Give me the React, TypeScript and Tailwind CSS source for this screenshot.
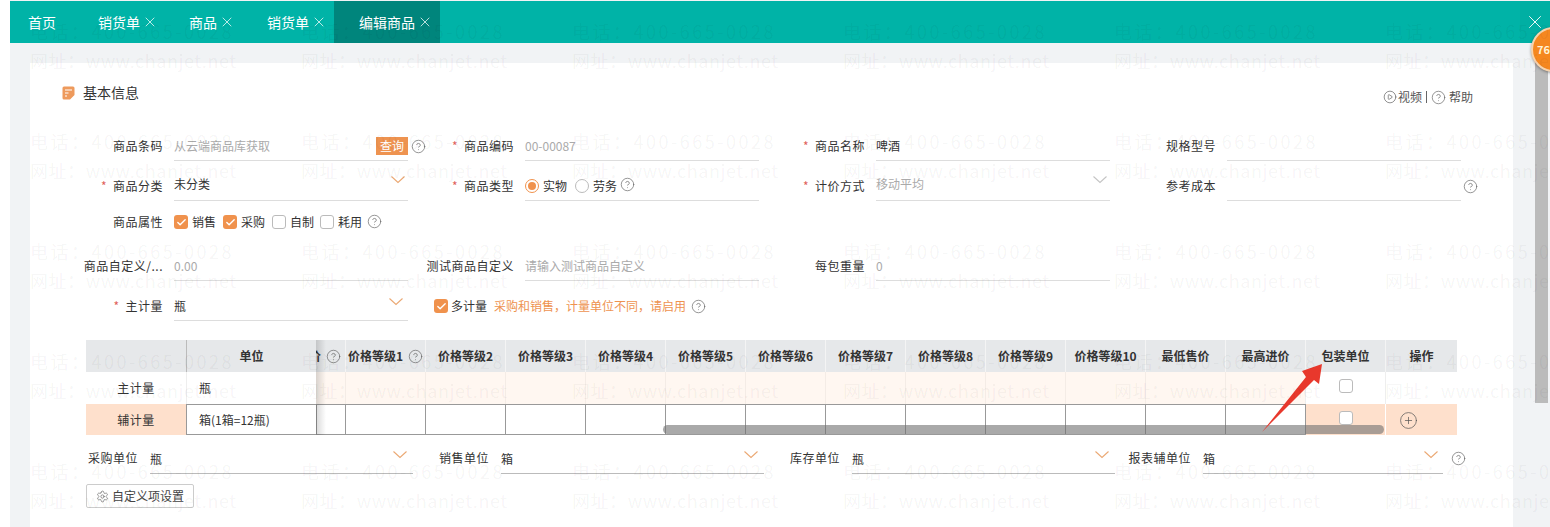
import type { ReactNode } from "react";
import { Check, CirclePlay, CirclePlus, CircleHelp, Settings, X } from "lucide-react";

const PRICE_COLS = Array.from({ length: 10 }, (_, i) => `价格等级${i + 1}`);

function Help({ className = "" }: { className?: string }) {
  return <CircleHelp size={15} strokeWidth={1.1} className={`shrink-0 text-[#666] ${className}`} />;
}

function Chevron({ muted = false, className = "" }: { muted?: boolean; className?: string }) {
  return (
    <svg width="14" height="8" viewBox="0 0 14 8" fill="none" className={`shrink-0 ${className}`}>
      <path d="M0.5 0.5 L7 6.5 L13.5 0.5" stroke={muted ? "#c4c4c4" : "#eba873"} strokeWidth="1.1" />
    </svg>
  );
}

function Box({ checked = false, className = "" }: { checked?: boolean; className?: string }) {
  if (checked) {
    return (
      <span className={`flex h-[14px] w-[14px] shrink-0 items-center justify-center rounded-[3px] bg-[#f0924d] ${className}`}>
        <Check size={11} strokeWidth={3} className="text-white" />
      </span>
    );
  }
  return <span className={`block h-[14px] w-[14px] shrink-0 rounded-[3px] border border-[#bbb] bg-white ${className}`} />;
}

function Field({
  label,
  required = false,
  trailing,
  children,
}: {
  label: string;
  required?: boolean;
  trailing?: ReactNode;
  children?: ReactNode;
}) {
  return (
    <div className="flex h-[40px] w-[351px] items-end">
      <div className="flex h-[30px] w-[99px] shrink-0 items-center justify-end whitespace-nowrap tracking-[0.5px] text-[#333]">
        {required && <span className="mr-[6px] text-[#e0605a]">*</span>}
        {label}
      </div>
      <div className="ml-[11px] flex h-[30px] w-[234px] shrink-0 items-center justify-between border-b border-[#ddd]">
        {children}
      </div>
      {trailing}
    </div>
  );
}

function Tab({ label, closable = true, active = false, width, pad }: { label: string; closable?: boolean; active?: boolean; width: string; pad: string }) {
  return (
    <div className={`flex h-full items-center text-[14px] text-white ${width} ${pad} ${active ? "bg-[#00857c]" : ""}`}>
      {label}
      {closable && <X size={16} strokeWidth={1.1} className="ml-[2px]" />}
    </div>
  );
}

function BottomField({ label, value, wide = true, trailing }: { label: string; value: string; wide?: boolean; trailing?: ReactNode }) {
  return (
    <div className="flex h-[30px] w-[351px] items-stretch">
      <div className="flex w-[52px] shrink-0 items-center justify-end whitespace-nowrap pb-[2px] tracking-[0.5px] text-[#333]">{label}</div>
      <div className={`ml-[12px] flex shrink-0 items-center justify-between border-b border-[#bbb] text-[#333] ${wide ? "w-[263px]" : "w-[240px]"}`}>
        <span>{value}</span>
        <Chevron className={`mb-[8px] ${wide ? "mr-[6px]" : "mr-[5px]"}`} />
      </div>
      {trailing}
    </div>
  );
}

function HeadCell({ children }: { children: ReactNode }) {
  return (
    <div className="flex items-center justify-center gap-[5px] overflow-hidden whitespace-nowrap border-l border-[#f4f4f4] bg-[#e6e8ea] font-bold text-[#333]">
      {children}
    </div>
  );
}

export default function App() {
  return (
    <div className="relative flex h-[527px] w-[1550px] overflow-hidden bg-white font-['Noto_Sans_CJK_SC','Liberation_Sans',sans-serif] text-[12px]">
      <div className="w-[10px] shrink-0 bg-white" />
      <div className="flex min-w-0 flex-1 flex-col bg-[#f1f3f5]">
        {/* tab bar */}
        <div className="mt-[1px] flex h-[42px] shrink-0 items-center justify-between bg-[#00b3a7]">
          <div className="flex h-full">
            <Tab label="首页" closable={false} width="w-[70px]" pad="pl-[18px]" />
            <Tab label="销货单" width="w-[91px]" pad="pl-[18px]" />
            <Tab label="商品" width="w-[78px]" pad="pl-[18px]" />
            <Tab label="销货单" width="w-[85px]" pad="pl-[18px]" />
            <Tab label="编辑商品" active width="w-[106px]" pad="pl-[25px]" />
          </div>
          <div className="flex h-full w-[30px] items-center justify-center bg-[#00afa3]">
            <X size={22} strokeWidth={1} className="text-white" />
          </div>
        </div>

        {/* panel */}
        <div className="mt-[20px] ml-[20px] w-[1483px] flex-1 bg-white">
          <div className="flex h-[58px] items-start justify-between pt-[19px] pl-[32px] pr-[40px]">
            <div className="flex items-center text-[14px] text-[#333]">
              <svg width="13" height="14" viewBox="0 0 13 14" className="mr-[8px]">
                <path d="M2 0.5 H11 A1.5 1.5 0 0 1 12.5 2 V9 L8 13.5 H2 A1.5 1.5 0 0 1 0.5 12 V2 A1.5 1.5 0 0 1 2 0.5 Z" fill="#ee9a5c" />
                <path d="M3 4 H10 M3 7 H6.5 M3 10 H5" stroke="#fff" strokeWidth="1.2" />
              </svg>
              基本信息
            </div>
            <div className="mt-[6px] flex items-center text-[#555]">
              <CirclePlay size={14} strokeWidth={1.1} className="mr-[1px]" />
              视频
              <span className="mx-[4px] h-[12px] w-px bg-[#666]" />
              <Help className="mr-[3px]" />
              帮助
            </div>
          </div>

          <div className="pl-[34px]">
            <div className="flex">
              <Field
                label="商品条码"
                trailing={<Help className="mb-[7px] ml-[3px]" />}
              >
                <span className="text-[#aaa]">从云端商品库获取</span>
                <span className="flex h-[18px] w-[32px] items-center justify-center bg-[#ee9350] text-white">查询</span>
              </Field>
              <Field label="商品编码" required>
                <span className="text-[#aaa]">00-00087</span>
              </Field>
              <Field label="商品名称" required>
                <span className="text-[#333]">啤酒</span>
              </Field>
              <Field label="规格型号" />
            </div>

            <div className="flex">
              <Field label="商品分类" required>
                <span className="-mt-[3px] text-[#333]">未分类</span>
                <Chevron className="mr-[3px] mb-[12px]" />
              </Field>
              <Field label="商品类型" required>
                <div className="flex items-center text-[#333]">
                  <span className="mr-[4px] flex h-[14px] w-[14px] items-center justify-center rounded-full border border-[#f0924d]">
                    <span className="h-[8px] w-[8px] rounded-full bg-[#f0924d]" />
                  </span>
                  实物
                  <span className="mr-[4px] ml-[8px] h-[14px] w-[14px] rounded-full border border-[#bbb]" />
                  劳务
                  <Help className="ml-[3px] -mt-[3px]" />
                </div>
              </Field>
              <Field label="计价方式" required>
                <span className="-mt-[4px] text-[#aaa]">移动平均</span>
                <Chevron muted className="mr-[3px] mb-[11px]" />
              </Field>
              <Field label="参考成本" trailing={<Help className="mb-[7px] ml-[2px]" />} />
            </div>

            <div className="flex h-[40px] items-center pt-[2px]">
              <div className="w-[99px] text-right tracking-[0.5px] text-[#333]">商品属性</div>
              <div className="ml-[11px] flex items-center text-[#333]">
                <Box checked className="mr-[4px]" />
                销售
                <Box checked className="mr-[4px] ml-[7px]" />
                采购
                <Box className="mr-[4px] ml-[7px]" />
                自制
                <Box className="mr-[4px] ml-[6px]" />
                耗用
                <Help className="ml-[5px] -mt-[1px]" />
              </div>
            </div>

            <div className="flex">
              <Field label="商品自定义/...">
                <span className="text-[#aaa]">0.00</span>
              </Field>
              <Field label="测试商品自定义">
                <span className="text-[#aaa]">请输入测试商品自定义</span>
              </Field>
              <Field label="每包重量">
                <span className="text-[#aaa]">0</span>
              </Field>
            </div>

            <div className="flex">
              <Field label="主计量" required>
                <span className="text-[#333]">瓶</span>
                <Chevron className="mr-[5px] mb-[8px]" />
              </Field>
              <div className="flex h-[40px] items-end">
                <div className="ml-[19px] flex h-[30px] items-center text-[#333]">
                  <Box checked className="mr-[3px]" />
                  多计量
                  <span className="ml-[7px] text-[#ee9350]">采购和销售，计量单位不同，请启用</span>
                  <Help className="ml-[5px]" />
                </div>
              </div>
            </div>
          </div>

          {/* unit table */}
          <div className="relative mt-[19px] ml-[56px] w-[1371px]">
            <div className="grid h-[95px] grid-cols-[100px_130px_29px_repeat(13,80px)_72px] grid-rows-[32px_32px_31px]">
              <div className="bg-[#e6e8ea]" />
              <div className="flex items-center justify-center border-l border-[#bbb] bg-[#e6e8ea] font-bold text-[#333]">单位</div>
              <div className="flex items-center justify-end gap-[5px] overflow-hidden bg-[#e6e8ea] pr-[4px] font-bold text-[#333]">
                价
                <Help />
              </div>
              {PRICE_COLS.map((name, i) => (
                <HeadCell key={name}>
                  {name}
                  {i === 0 && <Help />}
                </HeadCell>
              ))}
              {["最低售价", "最高进价", "包装单位", "操作"].map((name) => (
                <HeadCell key={name}>{name}</HeadCell>
              ))}

              <div className="flex items-center justify-center tracking-[0.5px] text-[#333]">主计量</div>
              <div className="flex items-center border-l border-[#eee] pl-[12px] text-[#333]">瓶</div>
              <div className="bg-[#fff7f1]" />
              {Array.from({ length: 12 }, (_, i) => (
                <div key={i} className="border-l border-[#f4ece6] bg-[#fff7f1]" />
              ))}
              <div className="flex items-center justify-center border-l border-[#eee]">
                <Box className="-mt-[4px]" />
              </div>
              <div className="border-l border-[#eee]" />

              <div className="flex items-center justify-center bg-[#fee0cc] tracking-[0.5px] text-[#333]">辅计量</div>
              <div className="flex items-center border-y border-l border-[#999] pl-[12px] text-[#333]">箱(1箱=12瓶)</div>
              <div className="border-y border-l border-[#999]" />
              {Array.from({ length: 12 }, (_, i) => (
                <div key={i} className="border-y border-l border-[#999]" />
              ))}
              <div className="flex items-center justify-center border-l border-[#999] bg-[#fee0cc]">
                <Box className="-mt-[3px]" />
              </div>
              <div className="flex items-center border-l border-[#fff] bg-[#fee0cc] pl-[13px]">
                <CirclePlus size={19} strokeWidth={0.9} className="mt-[2px] text-[#555]" />
              </div>
            </div>

            {/* shadow of the frozen columns */}
            <div className="pointer-events-none absolute top-0 bottom-0 left-[230px] w-[10px] bg-gradient-to-r from-black/15 to-transparent" />
            {/* horizontal scrollbar */}
            <div className="pointer-events-none absolute top-[85px] left-[577px] h-[9px] w-[721px] rounded-[5px] bg-[#707070]/60" />
            {/* red arrow drawn over the table */}
            <svg className="pointer-events-none absolute top-0 left-[1170px]" width="80" height="100" viewBox="0 0 80 100">
              <polygon points="6,92 50,37 46,31 66,24 63,44 58,40" fill="#e8382c" />
            </svg>
          </div>

          <div className="mt-[9px] ml-[56px] flex">
            <BottomField label="采购单位" value="瓶" />
            <BottomField label="销售单位" value="箱" />
            <BottomField label="库存单位" value="瓶" />
            <BottomField label="报表辅单位" value="箱" wide={false} trailing={<Help className="mt-[7px] ml-[8px]" />} />
          </div>

          <button className="mt-[10px] ml-[56px] flex h-[24px] w-[108px] items-center justify-center rounded-[2px] border border-[#ccc] text-[#444]">
            <Settings size={13} strokeWidth={1} className="mr-[3px]" />
            自定义项设置
          </button>
        </div>
      </div>

      {/* page scrollbar */}
      <div className="absolute top-[43px] left-[1535px] h-[360px] w-[13px] bg-[#bbbbbb]" />
      {/* floating badge */}
      <div className="absolute top-[27px] left-[1531px] flex h-[45px] w-[45px] items-center rounded-full border-2 border-[#f7d3ad] bg-[#f5871f] pl-[4px] text-[11px] font-bold text-[#fff3d6] shadow-[0_1px_3px_rgba(0,0,0,0.4)]">
        76
      </div>
      {/* watermark over the whole page */}
      <div className="pointer-events-none absolute inset-0 grid grid-cols-[repeat(6,271px)] auto-rows-[110px] pt-[17px] pl-[30px] text-[18px] leading-[29px] tracking-[0.55px] whitespace-nowrap text-black/[0.05]">
        {Array.from({ length: 30 }, (_, i) => (
          <div key={i}>
            <div className="tracking-[2.5px]">电话：400-665-0028</div>
            <div>网址：www.chanjet.net</div>
          </div>
        ))}
      </div>
    </div>
  );
}
